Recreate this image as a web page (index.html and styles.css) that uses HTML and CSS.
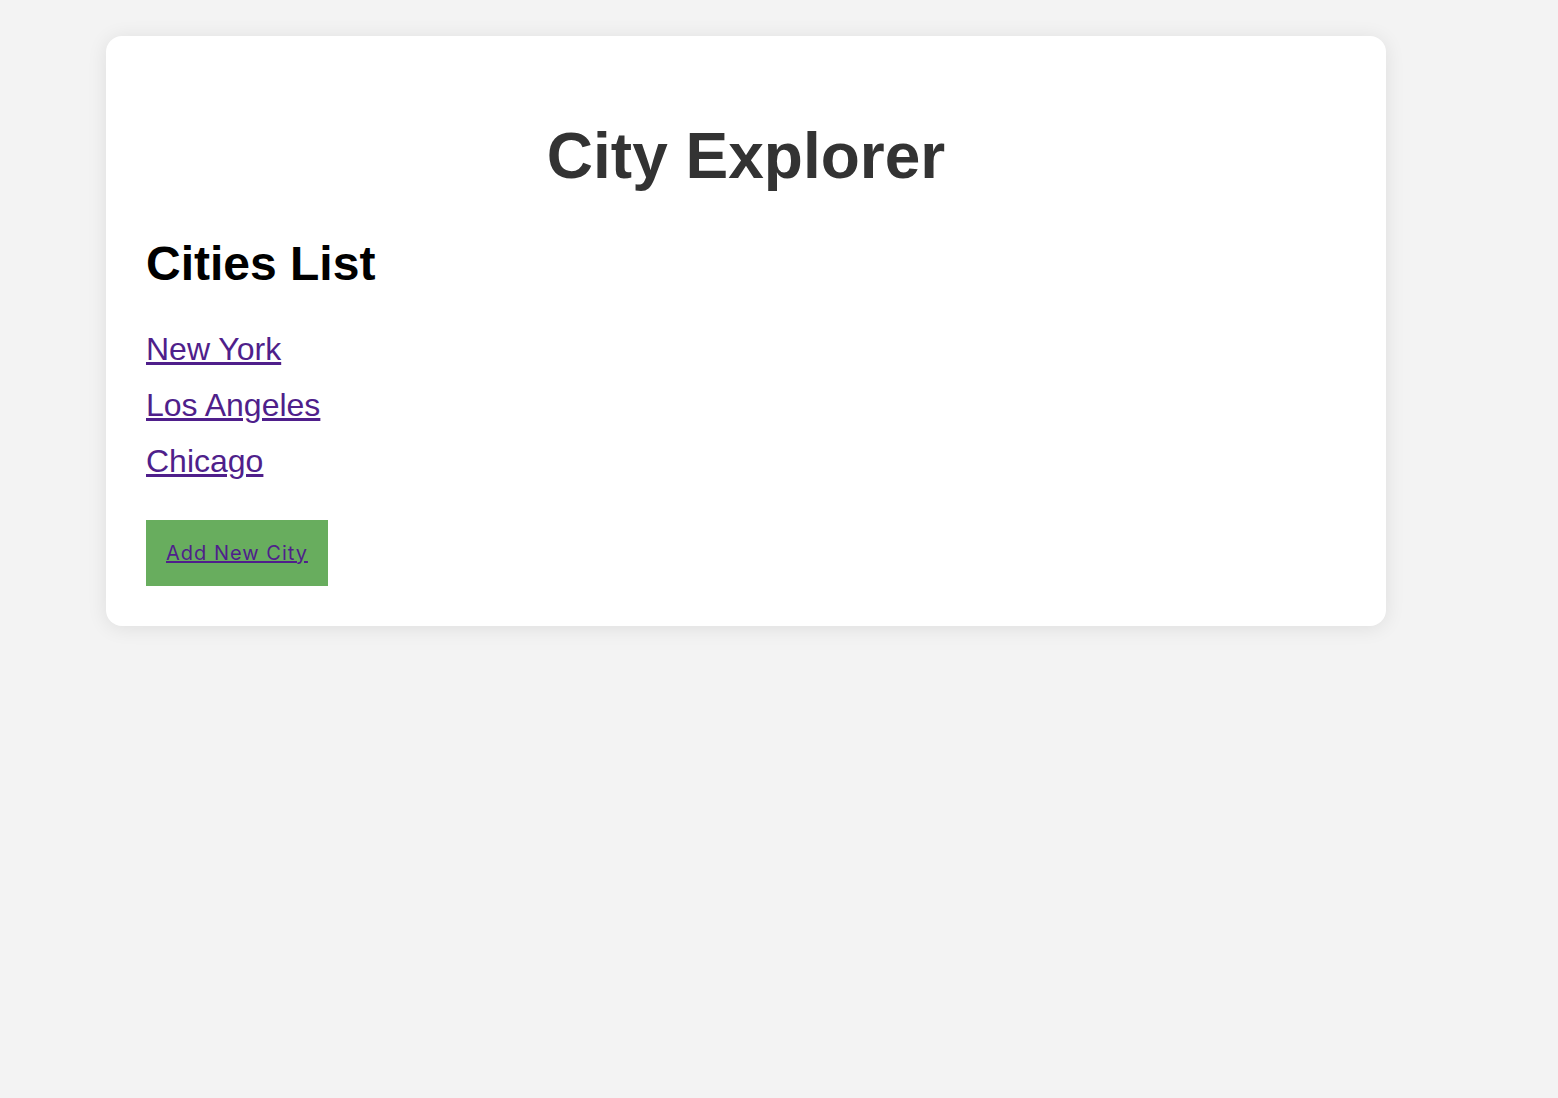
FILE: index.html
```html
<!DOCTYPE html>
<html lang="en">
<head>
<meta charset="utf-8">
<title>City Explorer</title>
<link rel="stylesheet" href="styles.css">
</head>
<body>
<div class="card">
  <h1 class="title">City Explorer</h1>
  <h2 class="subtitle">Cities List</h2>
  <ul class="city-list">
    <li class="city-item"><a class="city-link" href="#ny">New York</a></li>
    <li class="city-item"><a class="city-link" href="#la">Los Angeles</a></li>
    <li class="city-item"><a class="city-link" href="#chi">Chicago</a></li>
  </ul>
  <div class="actions">
    <a class="add-btn" href="#add">Add New City</a>
  </div>
</div>
</body>
</html>
```

FILE: styles.css
```css
html, body {
  margin: 0;
  padding: 0;
}
body {
  background: #f3f3f3;
  font-family: "Liberation Sans", Arial, sans-serif;
  min-height: 1098px;
}
.card {
  box-sizing: border-box;
  width: 1280px;
  margin: 36px 0 0 106px;
  padding: 40px;
  background: #ffffff;
  border-radius: 16px;
  box-shadow: 0 2px 20px rgba(0, 0, 0, 0.09);
}
.title {
  margin: 43px 0;
  font-size: 64px;
  font-weight: bold;
  color: #333333;
  text-align: center;
}
.subtitle {
  margin: 40px 0;
  font-size: 48px;
  font-weight: bold;
  color: #000000;
}
.city-list {
  list-style: none;
  margin: 0;
  padding: 0;
}
.city-item {
  margin: 0 0 19.2px;
  font-size: 32px;
  line-height: 36.8px;
}
.city-item:last-child {
  margin-bottom: 0;
}
.city-link {
  color: #4f1f8b;
  text-decoration: underline;
}
.actions {
  margin-top: 40px;
}
.add-btn {
  display: inline-block;
  padding: 20px;
  background: #68ad5e;
  color: #4f1f8b;
  font-family: Inter, "Noto Sans", sans-serif;
  font-size: 20px;
  letter-spacing: 1px;
  line-height: 26px;
  text-decoration: underline;
  text-decoration-thickness: 2px;
}
```
